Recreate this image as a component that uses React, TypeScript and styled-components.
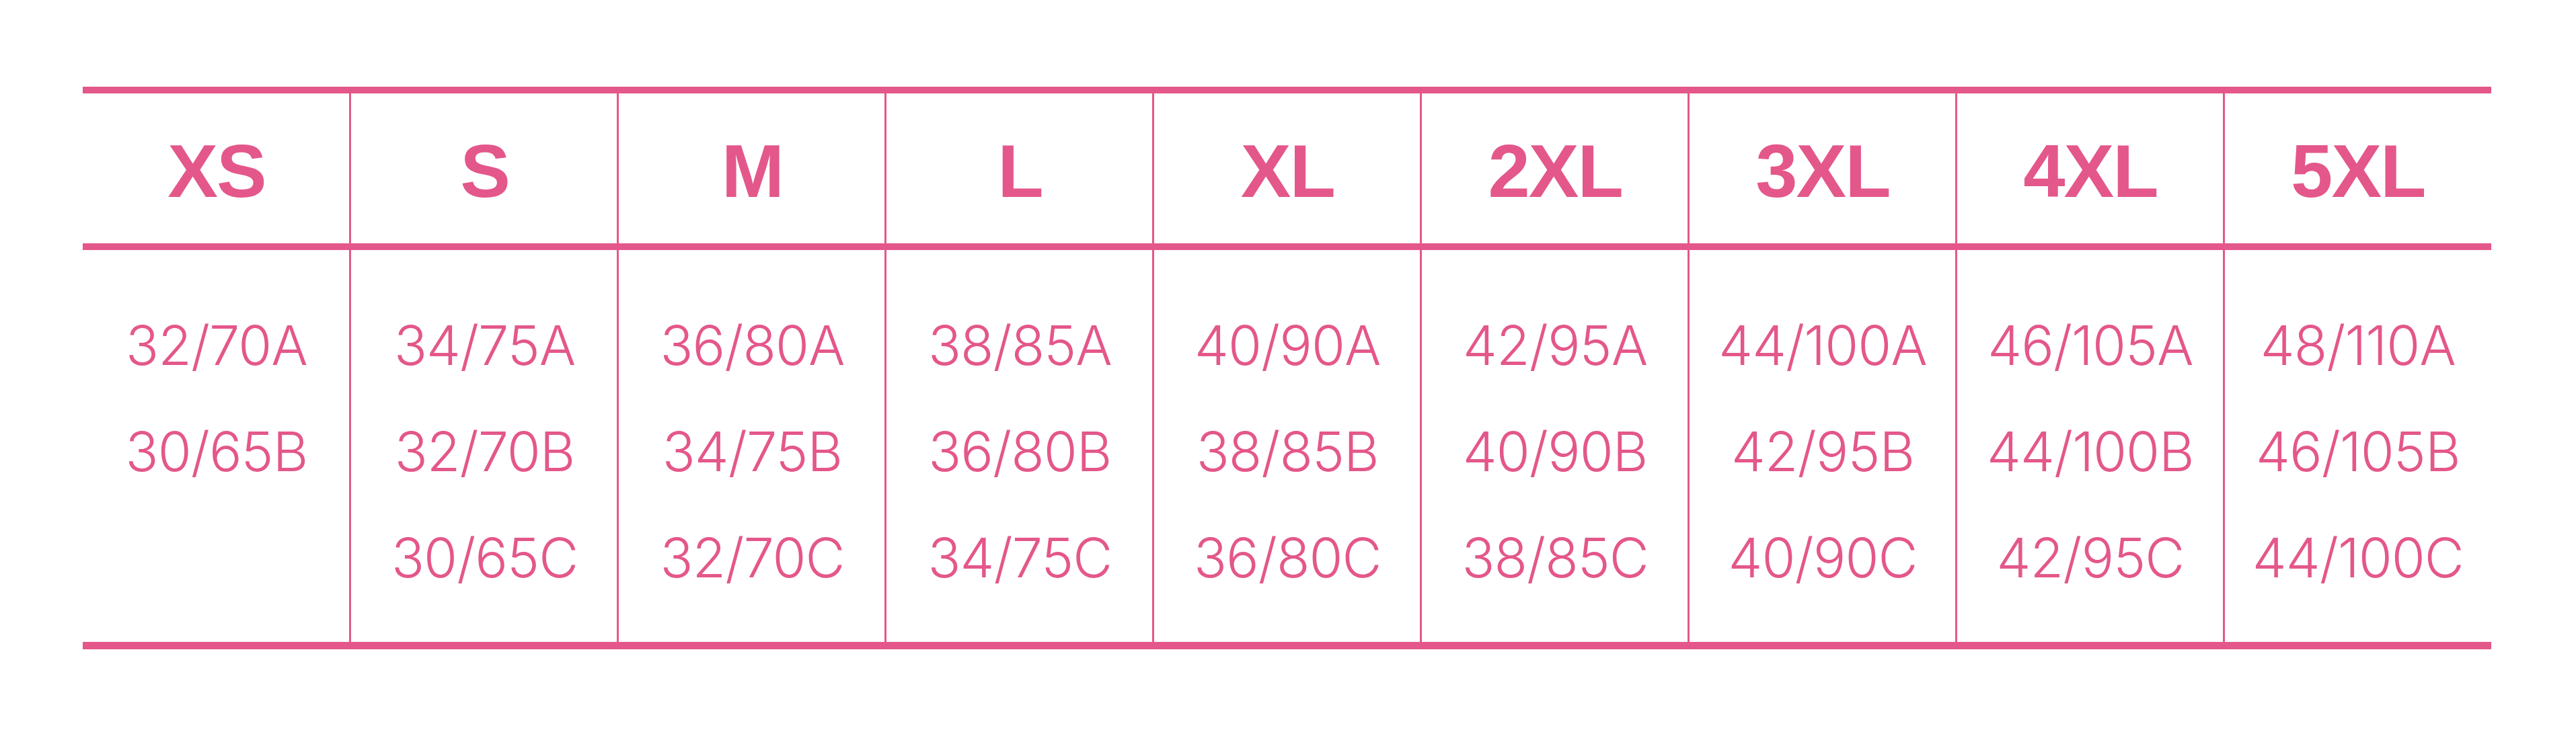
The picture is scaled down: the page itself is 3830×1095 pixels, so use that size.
import React from 'react';
import styled, { createGlobalStyle } from 'styled-components';

const pink = '#e4578a';

const GlobalStyle = createGlobalStyle`
    html, body {
        margin: 0;
        padding: 0;
        background: #ffffff;
    }
    body {
        width: 3830px;
        height: 1095px;
        overflow: hidden;
    }
`;

interface ColumnSettings {
    first?: boolean;
}

const Page = styled.div`
    padding: 129px 0 0 123px;
`;

const StyledTable = styled.div`
    width: 3581px;
    display: grid;
    grid-template-columns: repeat(9, 1fr);
    border-top: 10px solid ${pink};
    border-bottom: 11px solid ${pink};
`;

const StyledColumn = styled.div<ColumnSettings>`
    display: flex;
    flex-direction: column;
    border-left: ${({ first }) => (first ? 'none' : `3px solid ${pink}`)};
    margin-left: ${({ first }) => (first ? '0' : '-1.5px')};
`;

const SizeHead = styled.div`
    height: 233px;
    border-bottom: 10px solid ${pink};
    display: flex;
    align-items: center;
    justify-content: center;
    padding-top: 8px;
    box-sizing: border-box;
    color: ${pink};
    font-family: 'Liberation Sans', Arial, sans-serif;
    font-weight: 700;
    font-size: 112px;
    line-height: 1;
    letter-spacing: -2px;
`;

const SizeBody = styled.div`
    height: 583px;
    padding-top: 63px;
    box-sizing: border-box;
    display: flex;
    flex-direction: column;
    align-items: center;
`;

const SizeValue = styled.span`
    color: ${pink};
    font-family: Inter, Roboto, 'Liberation Sans', Arial, sans-serif;
    font-weight: 300;
    font-size: 81px;
    line-height: 158px;
    letter-spacing: -1px;
`;

const sizes: { label: string; values: string[] }[] = [
    { label: 'XS', values: ['32/70A', '30/65B'] },
    { label: 'S', values: ['34/75A', '32/70B', '30/65C'] },
    { label: 'M', values: ['36/80A', '34/75B', '32/70C'] },
    { label: 'L', values: ['38/85A', '36/80B', '34/75C'] },
    { label: 'XL', values: ['40/90A', '38/85B', '36/80C'] },
    { label: '2XL', values: ['42/95A', '40/90B', '38/85C'] },
    { label: '3XL', values: ['44/100A', '42/95B', '40/90C'] },
    { label: '4XL', values: ['46/105A', '44/100B', '42/95C'] },
    { label: '5XL', values: ['48/110A', '46/105B', '44/100C'] },
];

const App = () => (
    <>
        <GlobalStyle />
        <Page>
            <StyledTable>
                {sizes.map((size, i) => (
                    <StyledColumn key={size.label} first={i === 0}>
                        <SizeHead>{size.label}</SizeHead>
                        <SizeBody>
                            {size.values.map((v) => (
                                <SizeValue key={v}>{v}</SizeValue>
                            ))}
                        </SizeBody>
                    </StyledColumn>
                ))}
            </StyledTable>
        </Page>
    </>
);

export default App;
